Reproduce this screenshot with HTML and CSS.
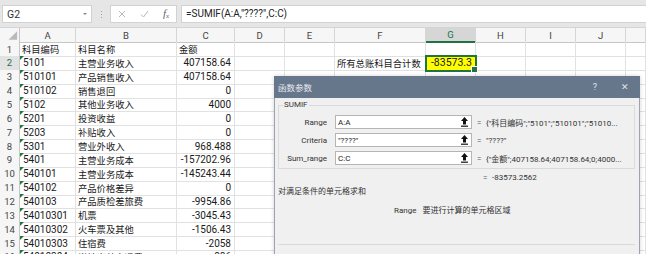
FILE: index.html
```html
<!DOCTYPE html>
<html lang="zh">
<head>
<meta charset="utf-8">
<title>SUMIF</title>
<link rel="stylesheet" href="styles.css">
</head>
<body>
<div class="app">
  <div class="fbar">
    <div class="namebox"><span>G2</span><span class="dd"></span></div>
    <div class="grip"><i></i><i></i><i></i></div>
    <div class="fxbox">
      <svg class="ico" width="8" height="8" viewBox="0 0 8 8"><path d="M1 1L7 7M7 1L1 7" stroke="#b8b8b8" stroke-width="1" fill="none"/></svg>
      <svg class="ico" width="9" height="8" viewBox="0 0 9 8"><path d="M1 4.5L3.5 7L8 1" stroke="#b8b8b8" stroke-width="1" fill="none"/></svg>
      <span class="fx">f<sub>x</sub></span>
    </div>
    <div class="formula">=SUMIF(A:A,"????",C:C)</div>
  </div>

  <div class="sheet">
    <div class="row hrow">
      <span class="corner"><svg width="20" height="14" viewBox="0 0 20 14"><polygon points="18,3 18,12 9,12" fill="#b9b9b9"/></svg></span>
      <span>A</span><span>B</span><span>C</span><span>D</span><span>E</span><span>F</span><span class="hs">G</span><span>H</span><span>I</span><span>J</span><span></span>
    </div>
    <div class="row"><span class="rh">1</span><span class="zh">科目编码</span><span class="zh">科目名称</span><span class="zh">金额</span><span></span><span></span><span></span><span></span><span></span><span></span><span></span><span></span></div>
    <div class="row"><span class="rh rs">2</span><span class="t">5101</span><span class="zh">主营业务收入</span><span class="n">407158.64</span><span></span><span></span><span class="zh">所有总账科目合计数</span><span class="n sel">-83573.3</span><span></span><span></span><span></span><span></span></div>
    <div class="row"><span class="rh">3</span><span class="t">510101</span><span class="zh">产品销售收入</span><span class="n">407158.64</span><span></span><span></span><span></span><span></span><span></span><span></span><span></span><span></span></div>
    <div class="row"><span class="rh">4</span><span class="t">510102</span><span class="zh">销售退回</span><span class="n">0</span><span></span><span></span><span></span><span></span><span></span><span></span><span></span><span></span></div>
    <div class="row"><span class="rh">5</span><span class="t">5102</span><span class="zh">其他业务收入</span><span class="n">4000</span><span></span><span></span><span></span><span></span><span></span><span></span><span></span><span></span></div>
    <div class="row"><span class="rh">6</span><span class="t">5201</span><span class="zh">投资收益</span><span class="n">0</span><span></span><span></span><span></span><span></span><span></span><span></span><span></span><span></span></div>
    <div class="row"><span class="rh">7</span><span class="t">5203</span><span class="zh">补贴收入</span><span class="n">0</span><span></span><span></span><span></span><span></span><span></span><span></span><span></span><span></span></div>
    <div class="row"><span class="rh">8</span><span class="t">5301</span><span class="zh">营业外收入</span><span class="n">968.488</span><span></span><span></span><span></span><span></span><span></span><span></span><span></span><span></span></div>
    <div class="row"><span class="rh">9</span><span class="t">5401</span><span class="zh">主营业务成本</span><span class="n">-157202.96</span><span></span><span></span><span></span><span></span><span></span><span></span><span></span><span></span></div>
    <div class="row"><span class="rh">10</span><span class="t">540101</span><span class="zh">主营业务成本</span><span class="n">-145243.44</span><span></span><span></span><span></span><span></span><span></span><span></span><span></span><span></span></div>
    <div class="row"><span class="rh">11</span><span class="t">540102</span><span class="zh">产品价格差异</span><span class="n">0</span><span></span><span></span><span></span><span></span><span></span><span></span><span></span><span></span></div>
    <div class="row"><span class="rh">12</span><span class="t">540103</span><span class="zh">产品质检差旅费</span><span class="n">-9954.86</span><span></span><span></span><span></span><span></span><span></span><span></span><span></span><span></span></div>
    <div class="row"><span class="rh">13</span><span class="t">54010301</span><span class="zh">机票</span><span class="n">-3045.43</span><span></span><span></span><span></span><span></span><span></span><span></span><span></span><span></span></div>
    <div class="row"><span class="rh">14</span><span class="t">54010302</span><span class="zh">火车票及其他</span><span class="n">-1506.43</span><span></span><span></span><span></span><span></span><span></span><span></span><span></span><span></span></div>
    <div class="row"><span class="rh">15</span><span class="t">54010303</span><span class="zh">住宿费</span><span class="n">-2058</span><span></span><span></span><span></span><span></span><span></span><span></span><span></span><span></span></div>
    <div class="row"><span class="rh">16</span><span class="t">54010304</span><span class="zh">当地出差交通费</span><span class="n">-886</span><span></span><span></span><span></span><span></span><span></span><span></span><span></span><span></span></div>
  </div>

  <div class="dialog">
    <div class="dtitle">
      <span>函数参数</span>
      <span class="dbtns"><span>?</span><span>✕</span></span>
    </div>
    <div class="dbody">
      <fieldset class="grp">
        <legend>SUMIF</legend>
        <div class="arg">
          <span class="lbl">Range</span>
          <span class="inp"><span>A:A</span><svg width="7" height="10" viewBox="0 0 7 10"><path d="M3.5 0L7 4H5V7.5H2V4H0Z" fill="#111"/><rect x="0" y="8.6" width="7" height="1.2" fill="#111"/></svg></span>
          <span class="eq">=</span>
          <span class="val">{"科目编码";"5101";"510101";"51010...</span>
        </div>
        <div class="arg">
          <span class="lbl">Criteria</span>
          <span class="inp"><span>"????"</span><svg width="7" height="10" viewBox="0 0 7 10"><path d="M3.5 0L7 4H5V7.5H2V4H0Z" fill="#111"/><rect x="0" y="8.6" width="7" height="1.2" fill="#111"/></svg></span>
          <span class="eq">=</span>
          <span class="val">"????"</span>
        </div>
        <div class="arg">
          <span class="lbl">Sum_range</span>
          <span class="inp"><span>C:C</span><svg width="7" height="10" viewBox="0 0 7 10"><path d="M3.5 0L7 4H5V7.5H2V4H0Z" fill="#111"/><rect x="0" y="8.6" width="7" height="1.2" fill="#111"/></svg></span>
          <span class="eq">=</span>
          <span class="val">{"金额";407158.64;407158.64;0;4000...</span>
        </div>
      </fieldset>
      <div class="result"><span class="eq">=</span><span>-83573.2562</span></div>
      <div class="desc">对满足条件的单元格求和</div>
      <div class="argdesc"><span>Range</span><span>要进行计算的单元格区域</span></div>
      <div class="sep"></div>
    </div>
  </div>
</div>
</body>
</html>
```

FILE: styles.css
```css
* { box-sizing: border-box; margin: 0; padding: 0; }
body {
  margin: 0;
  width: 646px;
  height: 254px;
  overflow: hidden;
  background: #fff;
  font-family: Roboto, "Noto Sans CJK SC", sans-serif;
  color: #222;
}
.app { position: relative; width: 646px; height: 254px; overflow: hidden; }

/* formula bar */
.fbar {
  display: flex;
  align-items: flex-start;
  height: 28px;
  padding: 5px 0 0 2px;
  background: #e6e6e6;
  border-bottom: 1px solid #d4d4d4;
}
.namebox {
  width: 90px;
  height: 18px;
  background: #fff;
  border: 1px solid #d2d2d2;
  display: flex;
  align-items: center;
  justify-content: space-between;
  padding: 0 4px 0 4px;
  font-size: 10.5px;
  color: #333;
}
.dd {
  width: 0; height: 0;
  border-left: 2px solid transparent;
  border-right: 2px solid transparent;
  border-top: 2px solid #888;
}
.grip {
  width: 18px;
  height: 18px;
  display: flex;
  flex-direction: column;
  align-items: center;
  justify-content: center;
  gap: 2px;
}
.grip i { display: block; width: 1px; height: 1px; background: #a0a0a0; }
.fxbox {
  width: 67px;
  height: 18px;
  background: #fff;
  border: 1px solid #d2d2d2;
  display: flex;
  align-items: center;
  padding-left: 7px;
  gap: 14px;
}
.fx {
  font-family: "Liberation Serif", serif;
  font-style: italic;
  font-size: 11px;
  color: #666;
  line-height: 1;
}
.fx sub { font-size: 7px; vertical-align: -1px; }
.formula {
  flex: 1;
  height: 18px;
  margin-left: 4px;
  background: #fff;
  border: 1px solid #d2d2d2;
  border-right: none;
  padding-left: 4px;
  font-size: 10px;
  line-height: 16px;
  color: #222;
}

/* sheet */
.row {
  display: grid;
  grid-template-columns: 20px 56px 101px 58px 50px 50px 91px 50px 50px 50px 50px 20px;
  height: 13.87px;
}
.row > span {
  position: relative;
  display: flex;
  align-items: center;
  border-right: 1px solid #e1e1e1;
  border-bottom: 1px solid #e1e1e1;
  font-size: 10px;
  padding: 0 2px 0 3px;
  white-space: nowrap;
  color: #1a1a1a;
}
.hrow { height: 14px; }
.hrow > span {
  justify-content: center;
  background: #f6f6f6;
  color: #444;
  font-size: 9.5px;
  border-right: 1px solid #d6d6d6;
  border-bottom: 1px solid #c6c6c6;
  padding: 0;
}
.hrow > .corner { padding: 0; border-right: 1px solid #c6c6c6; }
.hrow > .hs {
  background: #d6d6d6;
  color: #217346;
  border-bottom: 2px solid #217346;
}
.row > .rh {
  justify-content: center;
  background: #f6f6f6;
  color: #444;
  font-size: 9.5px;
  padding: 0;
  border-right: 1px solid #c6c6c6;
  border-bottom: 1px solid #dcdcdc;
}
.row > .rs { background: #e2e2e2; color: #217346; }
.row > .zh { font-size: 9.3px; padding-left: 2px; }
.row > .n { justify-content: flex-end; padding-right: 3px; }
.row > .t::before {
  content: "";
  position: absolute;
  left: 0;
  top: 0;
  border-top: 4px solid #1d7a3e;
  border-right: 4px solid transparent;
}
.row > .sel {
  background: #ffff00;
  outline: 2px solid #217346;
  outline-offset: -1px;
  z-index: 1;
  font-size: 10.5px;
}
.row > .sel::after {
  content: "";
  position: absolute;
  right: -3px;
  bottom: -3px;
  width: 5px;
  height: 5px;
  background: #217346;
  border: 1px solid #fff;
}

/* dialog */
.dialog {
  position: absolute;
  left: 274px;
  top: 76px;
  width: 366px;
  height: 200px;
  background: #f0f0f0;
  border: 1px solid #9aa3ae;
  border-top: none;
  box-shadow: 0 0 4px rgba(0, 0, 0, 0.18);
  font-size: 8px;
  color: #333;
  z-index: 2;
}
.dtitle {
  height: 22px;
  margin: 0 -1px;
  background: #67778b;
  color: #e8ecf1;
  display: flex;
  align-items: center;
  justify-content: space-between;
  padding-left: 4px;
  font-size: 8.5px;
}
.dbtns { display: flex; }
.dbtns > span { width: 30px; text-align: center; font-size: 9px; color: #dfe4ea; }
.dbody { padding: 0 4px 0 3px; }
.grp {
  margin-top: 2px;
  border: 1px solid #dadada;
  padding: 5px 0 3px 0;
  display: flex;
  flex-direction: column;
  gap: 4px;
}
.grp legend {
  margin-left: 4px;
  padding: 0 1px;
  font-size: 8px;
  line-height: 10px;
  color: #333;
}
.arg {
  display: flex;
  align-items: center;
  height: 14px;
}
.lbl { width: 48px; text-align: right; }
.inp {
  width: 137px;
  height: 14px;
  margin-left: 8px;
  background: #fff;
  border: 1px solid #b5b5b5;
  display: flex;
  align-items: center;
  justify-content: space-between;
  padding: 0 3px 0 2px;
  color: #222;
}
.eq { margin-left: 5px; width: 4px; color: #555; }
.val { margin-left: 5px; white-space: nowrap; color: #333; }
.result {
  margin-top: 4px;
  padding-left: 205px;
  display: flex;
  line-height: 10px;
}
.result .eq { margin-left: 0; margin-right: 5px; }
.desc { margin-top: 4px; line-height: 10px; }
.argdesc {
  margin-top: 9px;
  padding-left: 116px;
  display: flex;
  gap: 6px;
  line-height: 10px;
}
.sep { margin-top: 28px; height: 1px; background: #d9d9d9; }
```
